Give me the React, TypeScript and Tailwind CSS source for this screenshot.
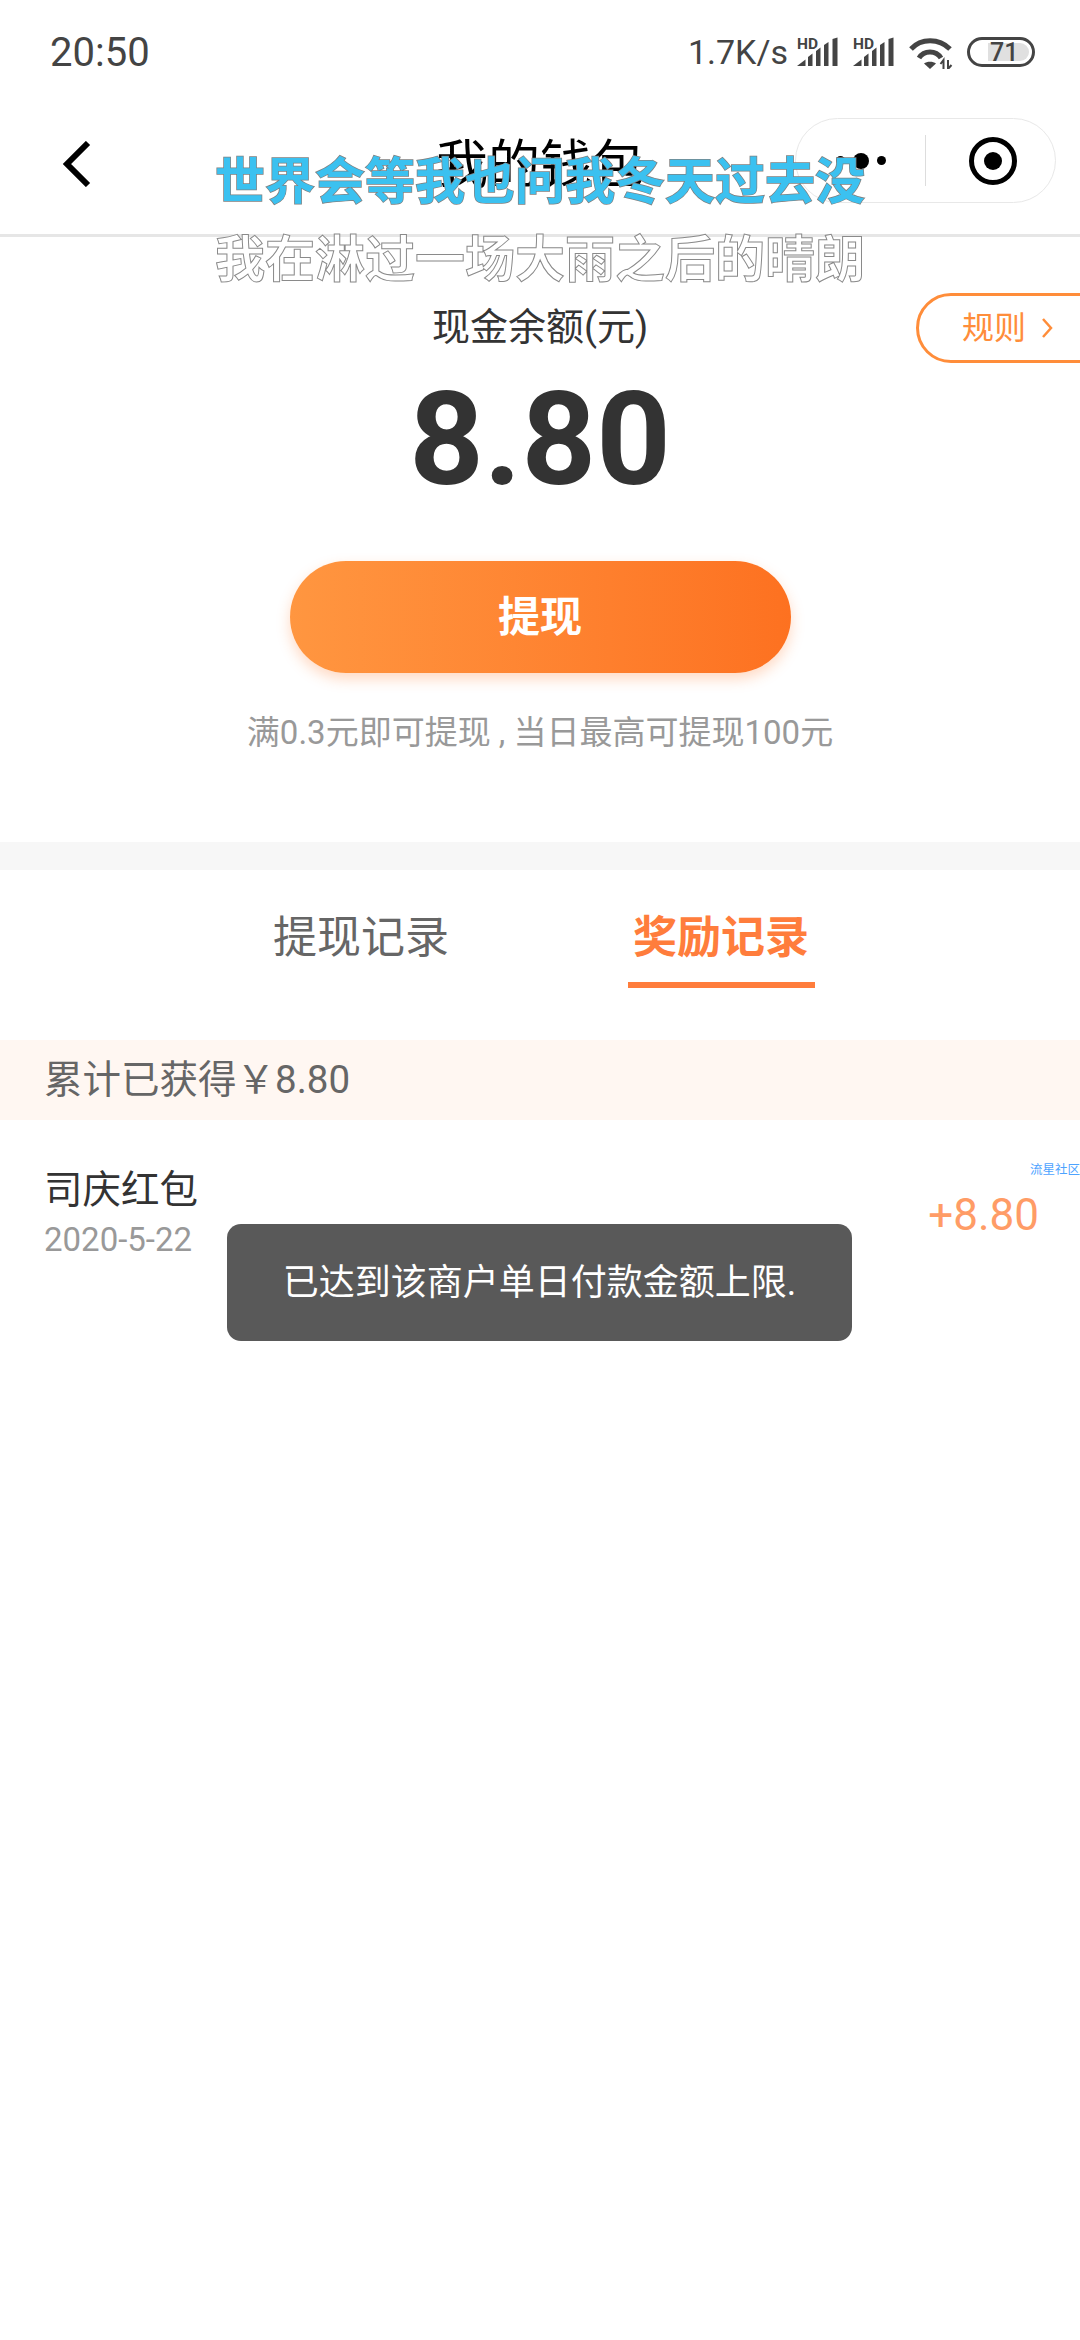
const FONT = "font-['Roboto','Noto_Sans_CJK_SC',sans-serif]";

function SignalIcon() {
  return (
    <svg width="41" height="30" viewBox="0 0 41 30" className="block overflow-visible">
      <text x="0" y="11.5" fontSize="15.5" fontWeight="700" fill="#444" fontFamily="Roboto, sans-serif">HD</text>
      <polygon points="0,29 8.5,22.5 8.5,29" fill="#444" />
      <polygon points="11,20 15.5,16.5 15.5,29 11,29" fill="#444" />
      <polygon points="19,14 23.5,10.5 23.5,29 19,29" fill="#444" />
      <polygon points="27,8 31.5,5 31.5,29 27,29" fill="#444" />
      <polygon points="35.5,2 40.5,0.5 40.5,29 35.5,29" fill="#444" />
    </svg>
  );
}

function WifiIcon() {
  return (
    <svg width="44" height="31" viewBox="0 0 44 31" className="block">
      <path d="M2 11 C12 0 30 0 41 11" fill="none" stroke="#444" strokeWidth="5" />
      <path d="M10 20 C15 12 27 12 32 20" fill="none" stroke="#444" strokeWidth="5" />
      <path d="M21 31 L15 25.5 C18 23 24 23 27 25.5 Z" fill="#444" />
      <path d="M34.5 31 V22 L31.5 26 M39 22 V31 L42.5 27" fill="none" stroke="#444" strokeWidth="2" />
    </svg>
  );
}

function Battery() {
  return (
    <div className="flex h-[30px] w-[68px] items-center rounded-[15px] border-[3px] border-[#444] p-[3px] pl-[18px]">
      <div className="flex h-full w-full items-center rounded-r-[9px] bg-[#e0e0e0] text-[25px] font-medium leading-none text-[#444]">
        <span className="ml-[2px]">71</span>
      </div>
    </div>
  );
}

function StatusBar() {
  return (
    <div className="flex h-[104px] items-center justify-between pl-[50px] pr-[45px] text-[#444]">
      <span className="mt-[2px] text-[40px] leading-none">20:50</span>
      <div className="flex items-center">
        <span className="text-[34px] leading-none">1.7K/s</span>
        <div className="ml-[9px] flex items-center gap-[15px]">
          <SignalIcon />
          <SignalIcon />
        </div>
        <div className="ml-[15px] mt-[3px]">
          <WifiIcon />
        </div>
        <div className="ml-[14px]">
          <Battery />
        </div>
      </div>
    </div>
  );
}

function NavBar() {
  return (
    <div className="grid h-[133px] grid-cols-[1fr_auto_1fr] items-start border-b-[3px] border-[#e6e6e6]">
      <div className="pl-[62px] pt-[37px]">
        <svg width="30" height="46" viewBox="0 0 30 46" className="block">
          <path d="M26 2 L5 23 L26 44" fill="none" stroke="#000" strokeWidth="6" />
        </svg>
      </div>
      <div className="pt-[34px] text-[52px] leading-[56px] text-black">我的钱包</div>
      <div className="flex justify-end pr-[24px] pt-[14px]">
        <div className="flex h-[85px] w-[261px] items-center rounded-[43px] border border-[#e8e8e8]">
          <div className="flex w-[129px] items-center justify-center gap-[8px]">
            <span className="h-[9px] w-[9px] rounded-full bg-black" />
            <span className="h-[16px] w-[16px] rounded-full bg-black" />
            <span className="h-[9px] w-[9px] rounded-full bg-black" />
          </div>
          <div className="h-[51px] w-px bg-[#dddddd]" />
          <div className="flex flex-1 items-center justify-center pl-[5px]">
            <div className="flex h-[48px] w-[48px] items-center justify-center rounded-full border-[5px] border-black">
              <span className="h-[18px] w-[18px] rounded-full bg-black" />
            </div>
          </div>
        </div>
      </div>
    </div>
  );
}

function Balance() {
  return (
    <div className="relative h-[605px] text-center">
      <div className="pt-[65px] text-[38px] leading-[50px] text-[#333]">现金余额(元)</div>
      <div className="mt-[13px] text-[130px] font-bold leading-[150px] text-[#333]">8.80</div>
      <div className="mx-auto mt-[46px] flex h-[112px] w-[501px] items-center justify-center rounded-[56px] bg-gradient-to-r from-[#ff9640] to-[#fd7120] text-[42px] font-bold text-white shadow-[0_6px_14px_rgba(255,120,40,0.28)]">
        提现
      </div>
      <div className="mt-[38px] text-[33px] leading-[44px] text-[#999]">满0.3元即可提现 , 当日最高可提现100元</div>
      <div className="absolute right-[-40px] top-[56px] flex h-[70px] w-[204px] items-center rounded-[35px] border-[3px] border-[#ff8d3a] pl-[43px] text-[32px] text-[#ff8d3a]">
        <span>规则</span>
        <svg width="14" height="24" viewBox="0 0 14 24" className="ml-[14px]">
          <path d="M3 3 L11 12 L3 21" fill="none" stroke="#ff8d3a" strokeWidth="2.5" />
        </svg>
      </div>
    </div>
  );
}

function Tabs() {
  return (
    <div className="flex h-[170px] justify-center gap-[173px] pl-[2px] text-center text-[44px]">
      <div className="w-[187px] pt-[40px] leading-[56px] text-[#666]">提现记录</div>
      <div className="h-[118px] w-[187px] border-b-[6px] border-[#ff7d3c] pt-[40px] font-bold leading-[56px] text-[#ff7d3c]">奖励记录</div>
    </div>
  );
}

export default function App() {
  return (
    <div className={`${FONT} relative h-[2340px] w-[1080px] overflow-hidden bg-white`}>
      <StatusBar />
      <NavBar />
      <Balance />
      <div className="h-[28px] bg-[#f7f7f7]" />
      <Tabs />
      <div className="flex h-[80px] items-center bg-[#fff7f2] pl-[44px] text-[38.5px] text-[#666]">累计已获得￥8.80</div>
      <div className="flex items-start justify-between pl-[44px] pr-[41px] pt-[44px]">
        <div>
          <div className="text-[38.5px] leading-[52px] text-[#333]">司庆红包</div>
          <div className="mt-[2px] text-[33px] leading-[44px] text-[#999]">2020-5-22</div>
        </div>
        <div className="mt-[25px] text-[44px] leading-[52px] text-[#ff9c66]">+8.80</div>
      </div>

      {/* 歌词水印 */}
      <div className="absolute left-0 right-0 top-[154px] text-center text-[50px] font-bold leading-[56px] text-[#3bc1f0] [-webkit-text-stroke:1.5px_#808080] [paint-order:stroke_fill]">
        世界会等我也问我冬天过去没
      </div>
      <div className="absolute left-0 right-0 top-[232px] text-center text-[50px] font-bold leading-[56px] text-white [-webkit-text-stroke:1px_#8a8a8a]">
        我在淋过一场大雨之后的晴朗
      </div>

      <div className="absolute right-0 top-[1163px] text-[12.5px] leading-[14px] text-[#4da3ff]">流星社区</div>

      {/* toast */}
      <div className="absolute left-[227px] top-[1224px] flex h-[117px] w-[625px] items-center justify-center rounded-[14px] bg-[#595959] text-[36px] text-white">
        已达到该商户单日付款金额上限.
      </div>
    </div>
  );
}
